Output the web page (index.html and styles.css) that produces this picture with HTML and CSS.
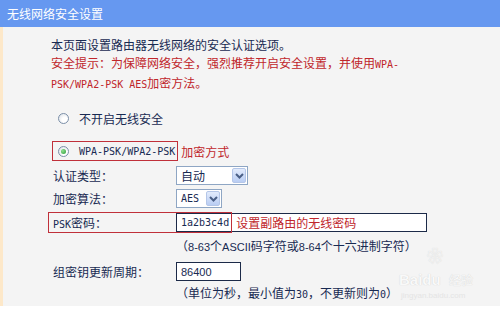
FILE: index.html
```html
<!DOCTYPE html>
<html lang="zh-CN">
<head>
    <meta charset="UTF-8">
    <meta name="viewport" content="width=device-width, initial-scale=1.0">
    <title>无线网络安全设置</title>
    <link rel="stylesheet" href="styles.css">
</head>
<body>
    <div class="title">无线网络安全设置</div>

    <div class="panel">
        <p class="intro">本页面设置路由器无线网络的安全认证选项。</p>
        <p class="warn">安全提示：为保障网络安全，强烈推荐开启安全设置，并使用<span class="mono">WPA-</span><br><span class="mono">PSK/WPA2-PSK AES</span>加密方法。</p>

        <div class="choice-row first">
            <label class="choice">
                <span class="radio"></span>
                <span>不开启无线安全</span>
            </label>
        </div>

        <div class="choice-row second">
            <label class="choice marked">
                <span class="radio checked"></span>
                <span class="mono">WPA-PSK/WPA2-PSK</span>
            </label>
            <span class="note">加密方式</span>
        </div>

        <div class="row auth">
            <span class="label">认证类型：</span>
            <div class="select wide">
                <span class="value">自动</span>
                <span class="arrow"><svg width="9" height="6" viewBox="0 0 9 6"><path d="M1 1 L4.5 4.5 L8 1" fill="none" stroke="#4a5f86" stroke-width="2"/></svg></span>
            </div>
        </div>

        <div class="row algo">
            <span class="label">加密算法：</span>
            <div class="select narrow">
                <span class="value mono">AES</span>
                <span class="arrow"><svg width="9" height="6" viewBox="0 0 9 6"><path d="M1 1 L4.5 4.5 L8 1" fill="none" stroke="#4a5f86" stroke-width="2"/></svg></span>
            </div>
        </div>

        <div class="row psk">
            <span class="label"><span class="mono">PSK</span>密码：</span>
            <div class="input long">
                <span class="mono">1a2b3c4d</span>
                <span class="note inside">设置副路由的无线密码</span>
            </div>
            <div class="mark"></div>
        </div>

        <div class="hint first-hint">（<span class="en">8-63</span>个<span class="en">ASCII</span>码字符或<span class="en">8-64</span>个十六进制字符）</div>

        <div class="row period">
            <span class="label">组密钥更新周期：</span>
            <div class="input short"><span class="en">86400</span></div>
        </div>

        <div class="hint second-hint">（单位为秒，最小值为<span class="mono">30</span>，不更新则为<span class="mono">0</span>）</div>

        <div class="watermark">
            <span class="paw">❀</span>
            <span class="brand">Bai<b>du</b></span>
            <span class="jy">经验</span>
            <span class="site">jingyan.baidu.com</span>
        </div>
    </div>
</body>
</html>
```

FILE: styles.css
```css
body {
    margin: 0;
    width: 500px;
    height: 315px;
    background-color: #fff;
    font-family: "Noto Sans CJK SC", sans-serif;
    font-size: 12px;
    color: #182a52;
    overflow: hidden;
}

.title {
    height: 27px;
    line-height: 27px;
    padding-left: 7px;
    background-color: #6698f0;
    color: #fff;
}

.panel {
    position: relative;
    height: 279px;
    box-sizing: border-box;
    padding: 9px 0 0 48px;
    background-color: #f4f4f4;
    border-left: 3px solid #fde8c9;
}

.intro,
.warn {
    margin: 0;
    line-height: 18px;
}

.warn {
    color: #c0262b;
}

.mono {
    font-family: "DejaVu Sans Mono", "Noto Sans CJK SC", monospace;
    font-size: 10px;
}

.en {
    font-family: "Liberation Sans", "Noto Sans CJK SC", sans-serif;
    font-size: 11px;
}

/* radio choices */
.choice-row {
    display: flex;
    align-items: center;
    height: 20px;
}

.choice-row.first {
    margin-top: 14px;
}

.choice-row.second {
    margin-top: 13px;
}

.choice {
    display: inline-flex;
    align-items: center;
    height: 20px;
    box-sizing: border-box;
    margin-left: 1px;
    padding: 0 2px 0 5px;
    border: 1px solid transparent;
}

.choice.marked {
    border-color: #c0303a;
}

.radio {
    display: flex;
    align-items: center;
    justify-content: center;
    width: 11px;
    height: 11px;
    margin-right: 10px;
    box-sizing: border-box;
    border: 1px solid #7b8fa8;
    border-radius: 50%;
    background: radial-gradient(circle at 65% 65%, #fff 30%, #d8dde4);
}

.radio.checked::after {
    content: "";
    width: 5px;
    height: 5px;
    border-radius: 50%;
    background: radial-gradient(circle at 35% 35%, #8fe08f, #2a9a36);
}

.note {
    color: #c0262b;
    margin-left: 3px;
}

/* form rows */
.row {
    display: flex;
    align-items: center;
    height: 19px;
    margin-left: 2px;
}

.row .label {
    width: 123px;
    flex-shrink: 0;
}

.row.auth {
    margin-top: 5px;
}

.row.algo {
    margin-top: 4px;
}

.row.psk {
    position: relative;
    margin-top: 5px;
}

.row.period {
    margin-top: 6px;
}

.select {
    display: flex;
    align-items: center;
    height: 19px;
    box-sizing: border-box;
    border: 1px solid #8ea6c4;
    background-color: #fff;
}

.select.wide {
    width: 72px;
}

.select.narrow {
    width: 46px;
}

.select .value {
    flex: 1;
    padding-left: 4px;
}

.arrow {
    display: flex;
    align-items: center;
    justify-content: center;
    width: 14px;
    height: 15px;
    margin-right: 1px;
    box-sizing: border-box;
    border: 1px solid #b4c6e8;
    border-radius: 2px;
    background: linear-gradient(#e2ebfc, #b9cdf3);
}

.input {
    display: flex;
    align-items: center;
    height: 19px;
    box-sizing: border-box;
    padding-left: 4px;
    border: 1px solid #1c2a48;
    background-color: #fff;
}

.input.long {
    width: 251px;
}

.input.short {
    width: 65px;
}

.note.inside {
    margin-left: 7px;
}

.mark {
    position: absolute;
    left: -5px;
    top: -1px;
    width: 184px;
    height: 21px;
    box-sizing: border-box;
    border: 1px solid #c0303a;
}

.hint {
    padding-left: 125px;
    line-height: 18px;
}

.hint.first-hint {
    margin-top: 5px;
}

.hint.second-hint {
    margin-top: 3px;
}

/* faint site watermark */
.watermark {
    position: absolute;
    left: 396px;
    top: 212px;
    width: 80px;
    height: 62px;
    color: #f9f9f9;
    text-shadow: 0 0 1px #c6c6c6;
    font-family: "Liberation Sans", sans-serif;
}

.watermark .paw {
    position: absolute;
    left: 28px;
    top: 8px;
    font-size: 16px;
    line-height: 20px;
}

.watermark .brand {
    position: absolute;
    left: 0;
    top: 32px;
    font-size: 15px;
    line-height: 18px;
    font-weight: bold;
}

.watermark .jy {
    position: absolute;
    left: 50px;
    top: 33px;
    font-family: "Noto Sans CJK SC", sans-serif;
    font-size: 12px;
    line-height: 16px;
}

.watermark .site {
    position: absolute;
    left: 2px;
    top: 52px;
    font-size: 8px;
    line-height: 10px;
    color: #e4e4e4;
    text-shadow: none;
}
```
